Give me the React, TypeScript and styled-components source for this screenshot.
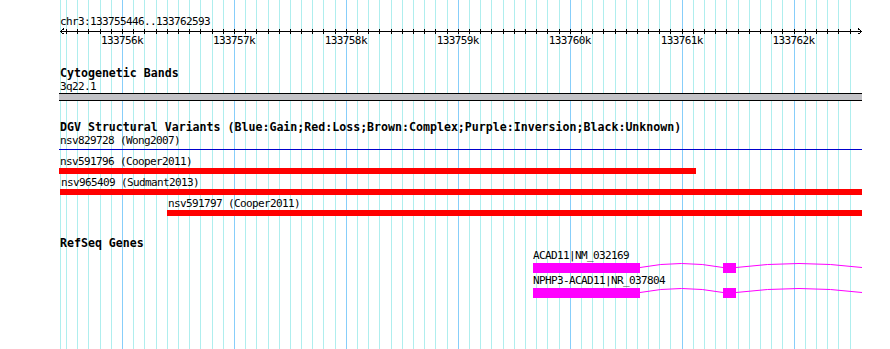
import React from 'react';
import styled, { createGlobalStyle } from 'styled-components';

// region shown in the panel
const START = 133755446;
const END = 133762593;
const ORIGIN = 60.5;
const SPAN = 800;
const PANEL_W = 890;
const PANEL_H = 349;
const TRACK_LEFT = 59;
const TRACK_RIGHT = 862;

const toX = (pos: number) => ORIGIN + ((pos - START) / (END - START)) * SPAN;
const clip = (x: number) => Math.min(TRACK_RIGHT, Math.max(TRACK_LEFT, x));
const crisp = (x: number) => Math.floor(x) + 0.5;

const ticks: { x: number; major: boolean; pos: number }[] = [];
for (let p = 133755500; p <= END; p += 100) {
  ticks.push({ x: toX(p), major: p % 1000 === 0, pos: p });
}

type Variant = {
  name: string;
  study: string;
  start: number;
  end: number;
  kind: 'loss' | 'line';
};

const variants: Variant[] = [
  { name: 'nsv829728', study: 'Wong2007', start: 133750000, end: 133770000, kind: 'line' },
  { name: 'nsv591796', study: 'Cooper2011', start: 133750000, end: 133761124, kind: 'loss' },
  { name: 'nsv965409', study: 'Sudmant2013', start: 133755440, end: 133770000, kind: 'loss' },
  { name: 'nsv591797', study: 'Cooper2011', start: 133756397, end: 133770000, kind: 'loss' },
];

type Gene = {
  name: string;
  exons: [number, number][];
  end: number;
};

const genes: Gene[] = [
  {
    name: 'ACAD11|NM_032169',
    exons: [
      [133759667, 133760623],
      [133761363, 133761479],
    ],
    end: 133770000,
  },
  {
    name: 'NPHP3-ACAD11|NR_037804',
    exons: [
      [133759667, 133760623],
      [133761363, 133761479],
    ],
    end: 133770000,
  },
];

const GlobalStyle = createGlobalStyle`
  html, body {
    margin: 0;
    padding: 0;
    background: #fff;
  }
`;

const Panel = styled.div`
  position: relative;
  width: ${PANEL_W}px;
  height: ${PANEL_H}px;
  overflow: hidden;
  background: #fff;
  color: #000;
  font-family: 'DejaVu Sans Mono', 'Liberation Mono', monospace;
`;

const GridLayer = styled.svg`
  position: absolute;
  top: 0;
  left: 0;
  z-index: 0;
`;

const Tracks = styled.div`
  position: relative;
  z-index: 1;
  padding-top: 15px;
`;

const Track = styled.section<{ $gap: number }>`
  margin-top: ${(p) => p.$gap}px;
`;

const TrackTitle = styled.h2`
  margin: 0;
  padding-left: 60px;
  height: 13px;
  font-size: 11.6px;
  font-weight: bold;
  line-height: 13px;
  white-space: nowrap;
`;

const TextRow = styled.div`
  padding-left: 60px;
  height: 13px;
  font-size: 11px;
  letter-spacing: -0.62px;
  line-height: 13px;
  white-space: nowrap;
`;

const Axis = styled.svg`
  display: block;
  height: 6px;
`;

const TickRow = styled.div`
  position: relative;
  height: 13px;
`;

const TickLabel = styled.span`
  position: absolute;
  top: 0;
  transform: translateX(-50%);
  font-size: 11px;
  letter-spacing: -0.62px;
  line-height: 13px;
  white-space: nowrap;
`;

const Band = styled.div`
  margin-left: ${TRACK_LEFT}px;
  width: ${TRACK_RIGHT - TRACK_LEFT}px;
  height: 6px;
  border-top: 1px solid #000;
  border-bottom: 1px solid #000;
  background: #c2c2c6;
`;

const FeatureRow = styled.div<{ $height: number }>`
  position: relative;
  height: ${(p) => p.$height}px;
`;

const FeatureLabel = styled.span<{ $lift?: number }>`
  position: absolute;
  top: ${(p) => -(p.$lift ?? 0)}px;
  z-index: 1;
  font-size: 11px;
  letter-spacing: -0.62px;
  line-height: 13px;
  white-space: nowrap;
`;

const VariantBar = styled.div<{ $kind: 'loss' | 'line' }>`
  position: absolute;
  top: ${(p) => (p.$kind === 'line' ? 15 : 13)}px;
  height: ${(p) => (p.$kind === 'line' ? 1 : 6)}px;
  background: ${(p) => (p.$kind === 'line' ? '#0000cd' : '#ff0000')};
`;

const GeneModel = styled.svg`
  position: absolute;
  top: 13px;
  left: 0;
  overflow: visible;
`;

const Grid = () => (
  <GridLayer width={PANEL_W} height={PANEL_H} shapeRendering="crispEdges">
    <line x1={60.5} x2={60.5} y1={0} y2={PANEL_H} stroke="#afeeee" />
    {ticks.map((t) => (
      <line
        key={t.pos}
        x1={crisp(t.x)}
        x2={crisp(t.x)}
        y1={0}
        y2={PANEL_H}
        stroke={t.major ? '#87cefa' : '#afeeee'}
      />
    ))}
  </GridLayer>
);

const Ruler = () => (
  <Track $gap={0}>
    <TextRow>chr3:{START}..{END}</TextRow>
    <Axis width={PANEL_W} shapeRendering="crispEdges">
      <line x1={60} x2={862} y1={3.5} y2={3.5} stroke="#000" />
      <polyline points="64,0.5 60.5,3.5 64,6.5" fill="none" stroke="#000" />
      <polyline points="858,0.5 861.5,3.5 858,6.5" fill="none" stroke="#000" />
      {ticks.map((t) => (
        <line key={t.pos} x1={crisp(t.x)} x2={crisp(t.x)} y1={1} y2={6} stroke="#000" />
      ))}
    </Axis>
    <TickRow>
      {ticks
        .filter((t) => t.major)
        .map((t) => (
          <TickLabel key={t.pos} style={{ left: t.x - 0.5 }}>
            {t.pos / 1000}k
          </TickLabel>
        ))}
    </TickRow>
  </Track>
);

const VariantFeature = ({ v }: { v: Variant }) => {
  const x1 = Math.round(clip(toX(v.start)));
  const x2 = Math.round(clip(toX(v.end)));
  return (
    <FeatureRow $height={21}>
      <FeatureLabel style={{ left: x1 + 1 }}>
        {v.name} ({v.study})
      </FeatureLabel>
      <VariantBar $kind={v.kind} style={{ left: x1, width: x2 - x1 }} />
    </FeatureRow>
  );
};

const GeneFeature = ({ g }: { g: Gene }) => {
  const blocks = g.exons.map(([s, e]) => [Math.round(toX(s)), Math.round(toX(e))]);
  const gaps: [number, number][] = [];
  for (let i = 0; i < blocks.length; i++) {
    const from = blocks[i][1];
    const to = i + 1 < blocks.length ? blocks[i + 1][0] : Math.round(clip(toX(g.end)));
    gaps.push([from, to]);
  }
  return (
    <FeatureRow $height={25}>
      <GeneModel width={PANEL_W} height={10}>
        {gaps.map(([a, b]) => (
          <path
            key={a}
            d={`M${a},4.5 Q${(a + b) / 2},-3.5 ${b},4.5`}
            fill="none"
            stroke="#ff00ff"
            strokeWidth={1}
          />
        ))}
        {blocks.map(([a, b]) => (
          <rect key={a} x={a} y={0} width={b - a} height={10} fill="#ff00ff" shapeRendering="crispEdges" />
        ))}
      </GeneModel>
      <FeatureLabel $lift={1.5} style={{ left: blocks[0][0] }}>
        {g.name}
      </FeatureLabel>
    </FeatureRow>
  );
};

export default function App() {
  return (
    <>
      <GlobalStyle />
      <Panel>
        <Grid />
        <Tracks>
          <Ruler />
          <Track $gap={20}>
            <TrackTitle>Cytogenetic Bands</TrackTitle>
            <TextRow>3q22.1</TextRow>
            <Band />
          </Track>
          <Track $gap={20}>
            <TrackTitle>
              DGV Structural Variants (Blue:Gain;Red:Loss;Brown:Complex;Purple:Inversion;Black:Unknown)
            </TrackTitle>
            {variants.map((v) => (
              <VariantFeature key={v.name + v.study} v={v} />
            ))}
          </Track>
          <Track $gap={19}>
            <TrackTitle>RefSeq Genes</TrackTitle>
            {genes.map((g) => (
              <GeneFeature key={g.name} g={g} />
            ))}
          </Track>
        </Tracks>
      </Panel>
    </>
  );
}
